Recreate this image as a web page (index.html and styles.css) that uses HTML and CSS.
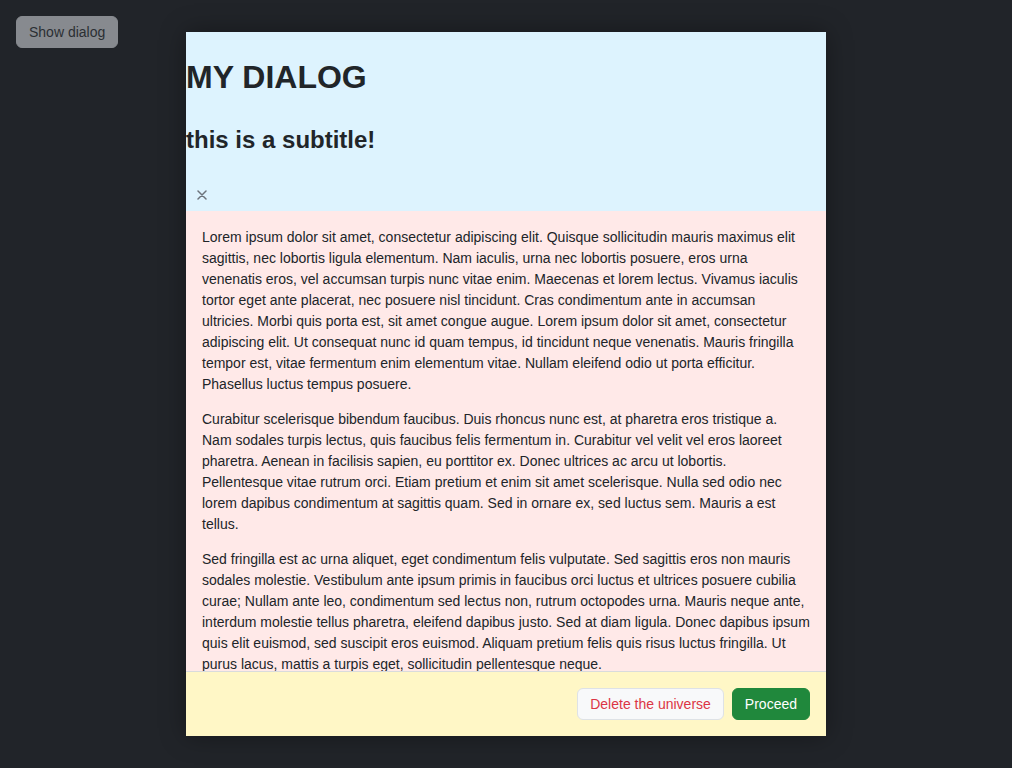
FILE: index.html
```html
<!DOCTYPE html>
<html lang="en">
<head>
<meta charset="utf-8">
<title>Dialog</title>
<link rel="stylesheet" href="styles.css">
</head>
<body>
<button class="show-btn" type="button">Show dialog</button>

<div class="dialog" role="dialog" aria-labelledby="dlg-title">
  <header class="dialog-header">
    <h1 id="dlg-title" class="dialog-title">MY DIALOG</h1>
    <h2 class="dialog-subtitle">this is a subtitle!</h2>
    <button class="close-btn" type="button" aria-label="Close">
      <svg width="10" height="10" viewBox="0 0 10 10" aria-hidden="true"><path d="M1 1L9 9M9 1L1 9" stroke="currentColor" stroke-width="1.5" stroke-linecap="round"/></svg>
    </button>
  </header>
  <div class="dialog-body">
    <p>Lorem ipsum dolor sit amet, consectetur adipiscing elit. Quisque sollicitudin mauris maximus elit sagittis, nec lobortis ligula elementum. Nam iaculis, urna nec lobortis posuere, eros urna venenatis eros, vel accumsan turpis nunc vitae enim. Maecenas et lorem lectus. Vivamus iaculis tortor eget ante placerat, nec posuere nisl tincidunt. Cras condimentum ante in accumsan ultricies. Morbi quis porta est, sit amet congue augue. Lorem ipsum dolor sit amet, consectetur adipiscing elit. Ut consequat nunc id quam tempus, id tincidunt neque venenatis. Mauris fringilla tempor est, vitae fermentum enim elementum vitae. Nullam eleifend odio ut porta efficitur. Phasellus luctus tempus posuere.</p>
    <p>Curabitur scelerisque bibendum faucibus. Duis rhoncus nunc est, at pharetra eros tristique a. Nam sodales turpis lectus, quis faucibus felis fermentum in. Curabitur vel velit vel eros laoreet pharetra. Aenean in facilisis sapien, eu porttitor ex. Donec ultrices ac arcu ut lobortis. Pellentesque vitae rutrum orci. Etiam pretium et enim sit amet scelerisque. Nulla sed odio nec lorem dapibus condimentum at sagittis quam. Sed in ornare ex, sed luctus sem. Mauris a est tellus.</p>
    <p>Sed fringilla est ac urna aliquet, eget condimentum felis vulputate. Sed sagittis eros non mauris sodales molestie. Vestibulum ante ipsum primis in faucibus orci luctus et ultrices posuere cubilia curae; Nullam ante leo, condimentum sed lectus non, rutrum octopodes urna. Mauris neque ante, interdum molestie tellus pharetra, eleifend dapibus justo. Sed at diam ligula. Donec dapibus ipsum quis elit euismod, sed suscipit eros euismod. Aliquam pretium felis quis risus luctus fringilla. Ut purus lacus, mattis a turpis eget, sollicitudin pellentesque neque.</p>
  </div>
  <footer class="dialog-footer">
    <button class="btn btn-danger-outline" type="button">Delete the universe</button>
    <button class="btn btn-success" type="button">Proceed</button>
  </footer>
</div>
</body>
</html>
```

FILE: styles.css
```css
html, body {
  height: 100%;
}
body {
  margin: 0;
  padding: 16px;
  box-sizing: border-box;
  background: #212429;
  font-family: "Liberation Sans", Arial, sans-serif;
  font-size: 14px;
  line-height: 1.5;
  color: #212529;
}

.show-btn {
  display: block;
  font: inherit;
  line-height: 20px;
  padding: 5px 12px;
  border: 1px solid #878a8f;
  border-radius: 6px;
  background: #878a8f;
  color: #2b2f33;
}

.dialog {
  position: fixed;
  top: 32px;
  bottom: 32px;
  left: 50%;
  width: 640px;
  margin-left: -320px;
  display: flex;
  flex-direction: column;
  box-shadow: 0 0 24px rgba(0, 0, 0, 0.35);
}

.dialog-header {
  background: #ddf3fe;
  flex: none;
}
.dialog-title {
  margin: 26px 0 0;
  font-size: 32px;
  line-height: 1.2;
  font-weight: 700;
  color: #212529;
}
.dialog-subtitle {
  margin: 30px 0 24px;
  font-size: 24px;
  line-height: 1.2;
  font-weight: 700;
  color: #212529;
}
.close-btn {
  display: flex;
  align-items: center;
  justify-content: center;
  width: 32px;
  height: 32px;
  padding: 0;
  border: 0;
  background: transparent;
  color: #6c737b;
}

.dialog-body {
  flex: 1;
  min-height: 0;
  overflow: hidden;
  padding: 16px 16px 0;
  background: #ffe9e8;
}
.dialog-body p {
  margin: 0 0 14px;
}

.dialog-footer {
  flex: none;
  display: flex;
  justify-content: flex-end;
  gap: 8px;
  padding: 16px;
  background: #fff7c6;
  border-top: 1px solid #d9dbdc;
}

.btn {
  font: inherit;
  line-height: 20px;
  padding: 5px 12px;
  border-radius: 6px;
  border: 1px solid transparent;
}
.btn-danger-outline {
  background: #f8f9fa;
  border-color: #dee2e6;
  color: #dc3545;
}
.btn-success {
  background: #20883c;
  border-color: #20883c;
  color: #ffffff;
}
```
